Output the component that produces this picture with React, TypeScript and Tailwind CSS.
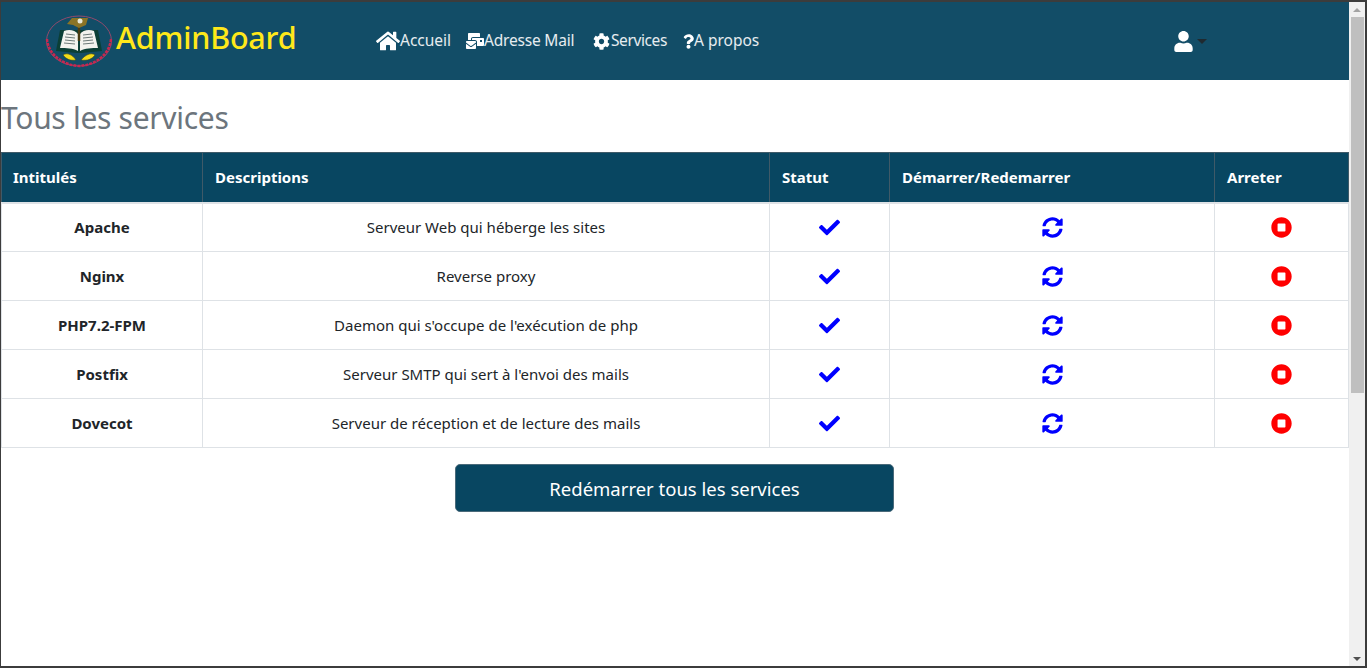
import { FaCheck, FaCog, FaHome, FaMailBulk, FaQuestion, FaStopCircle, FaSyncAlt, FaUser } from "react-icons/fa";

const services = [
  { name: "Apache", description: "Serveur Web qui héberge les sites" },
  { name: "Nginx", description: "Reverse proxy" },
  { name: "PHP7.2-FPM", description: "Daemon qui s'occupe de l'exécution de php" },
  { name: "Postfix", description: "Serveur SMTP qui sert à l'envoi des mails" },
  { name: "Dovecot", description: "Serveur de réception et de lecture des mails" },
];

const Logo = () => (
  <svg width="68" height="53" viewBox="0 0 68 53" className="shrink-0">
    <ellipse cx="34" cy="26" rx="32.5" ry="25" fill="none" stroke="#8f4a6c" strokeWidth="1" />
    <path d="M2 24 C3 38 16 50 34 51 C52 50 65 38 66 24" fill="none" stroke="#c8274f" strokeWidth="2.5" strokeDasharray="3 1" />
    <path d="M11 36 L15 15 L53 15 L57 36 L36 38 L32 38 Z" fill="#0b3f36" />
    <path d="M15 33 L19 16 C24 14 30 15 33 19 L33 36 C28 33 21 33 15 33 Z" fill="#f3f3ee" />
    <path d="M53 33 L49 16 C44 14 38 15 35 19 L35 36 C40 33 47 33 53 33 Z" fill="#f3f3ee" />
    <path d="M21 19 L30 20 M20 22 L30 23 M20 25 L30 26 M19 28 L30 29 M38 20 L47 19 M38 23 L48 22 M38 26 L48 25 M38 29 L49 28" stroke="#6d7a78" strokeWidth="1" />
    <path d="M34 4 L34 26" stroke="#4a3c12" strokeWidth="2.5" />
    <path d="M22 9 L27 3 L43 3 L41 10 L34 13 L28 10 Z" fill="#8a7426" />
    <circle cx="35" cy="6" r="2.5" fill="#e8e8d8" />
    <path d="M18 40 C22 37 28 40 31 45 C25 46 21 44 18 40 Z" fill="#f2dc1a" stroke="#34421c" strokeWidth="0.6" />
    <path d="M50 40 C46 37 40 40 36 45 C43 46 47 44 50 40 Z" fill="#f2dc1a" stroke="#34421c" strokeWidth="0.6" />
  </svg>
);

const NavLink = ({ icon, label, className }: { icon: React.ReactNode; label: string; className: string }) => (
  <a className={`flex items-center text-white/90 text-[15.5px] ${className}`}>
    {icon}
    <span>{label}</span>
  </a>
);

export default function App() {
  return (
    <div className="h-[668px] overflow-hidden flex border-2 border-l border-[#3c3c3c] bg-white font-['Noto_Sans','Open_Sans',sans-serif]">
      <div className="flex-1 min-w-0 flex flex-col">
        <nav className="h-[78px] shrink-0 bg-[#124d67] flex items-center pl-[44px]">
          <Logo />
          <span className="ml-[3px] mb-[6px] w-[260px] text-[30.5px] font-medium text-[#ffe81a] tracking-[-0.2px]">AdminBoard</span>
          <NavLink className="w-[90px]" icon={<FaHome size={24} className="text-white" />} label="Accueil" />
          <NavLink className="w-[126px] tracking-[-0.2px]" icon={<FaMailBulk size={18} className="text-white" />} label="Adresse Mail" />
          <NavLink className="w-[91px] tracking-[-0.4px]" icon={<FaCog size={17} className="text-white ml-[1px] mr-[1px]" />} label="Services" />
          <NavLink className="w-[490px]" icon={<FaQuestion size={17} className="text-white w-[11px]" />} label="A propos" />
          <FaUser size={21} className="text-white" />
          <span className="ml-[3px] mt-[1px] w-0 h-0 border-x-[5px] border-x-transparent border-t-[5px] border-t-[#1f2a30]" />
        </nav>

        <h1 className="h-[72px] shrink-0 pt-[2px] flex items-center text-[30px] text-[#6c757d] tracking-[-0.3px]">Tous les services</h1>

        <table className="w-full table-fixed border-collapse text-[15px] text-[#212529]">
          <colgroup>
            <col className="w-[201px]" />
            <col className="w-[567px]" />
            <col className="w-[120px]" />
            <col className="w-[325px]" />
            <col />
          </colgroup>
          <thead>
            <tr className="h-[50px] bg-[#084661] text-white text-left font-bold border-b-2 border-[#dee2e6]">
              <th className="pl-[11px] pr-3 border-x border-t border-[#3f5a68]">Intitulés</th>
              <th className="px-3 border-x border-t border-[#3f5a68]">Descriptions</th>
              <th className="px-3 border-x border-t border-[#3f5a68]">Statut</th>
              <th className="px-3 border-x border-t border-[#3f5a68]">Démarrer/Redemarrer</th>
              <th className="px-3 border-x border-t border-[#3f5a68]">Arreter</th>
            </tr>
          </thead>
          <tbody>
            {services.map((s) => (
              <tr key={s.name} className="h-[49px] text-center">
                <td className="border border-[#dee2e6] font-bold">{s.name}</td>
                <td className="border border-[#dee2e6]">{s.description}</td>
                <td className="border border-[#dee2e6]">
                  <FaCheck size={21} className="mx-auto text-[#0000ff]" />
                </td>
                <td className="border border-[#dee2e6]">
                  <FaSyncAlt size={21} className="mx-auto text-[#0000ff]" />
                </td>
                <td className="border border-[#dee2e6]">
                  <FaStopCircle size={21} className="mx-auto text-[#ff0000]" />
                </td>
              </tr>
            ))}
          </tbody>
        </table>

        <button className="mt-[16px] ml-[454px] w-[439px] h-[48px] shrink-0 pt-[1px] rounded-[5px] border border-[#4a6a7a] bg-[#084661] text-white text-[18.5px]">
          Redémarrer tous les services
        </button>
      </div>

      <div className="w-[16px] shrink-0 bg-[#f0f0f0] flex flex-col items-center">
        <div className="h-[15px] shrink-0 flex items-center justify-center">
          <span className="w-0 h-0 border-x-[4px] border-x-transparent border-b-[4px] border-b-[#a3a3a3]" />
        </div>
        <div className="w-[13px] h-[376px] bg-[#bfbfbf]" />
        <div className="flex-1" />
        <div className="h-[15px] shrink-0 flex items-center justify-center">
          <span className="w-0 h-0 border-x-[4px] border-x-transparent border-t-[4px] border-t-[#505050]" />
        </div>
      </div>
    </div>
  );
}
